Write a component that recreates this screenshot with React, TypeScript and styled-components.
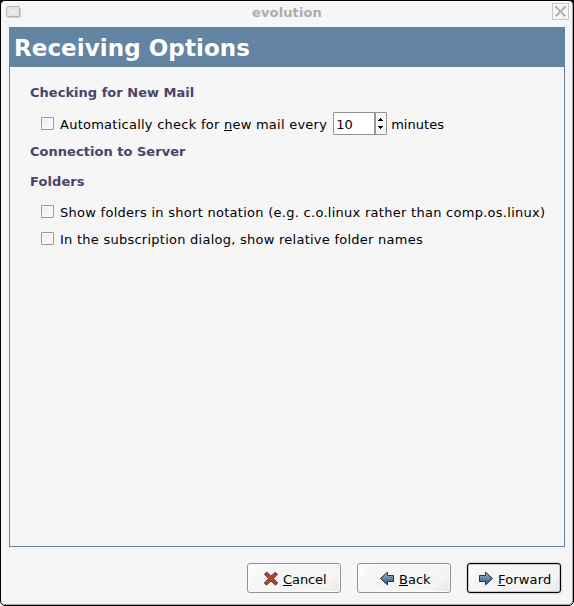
import React from 'react';
import styled, { createGlobalStyle } from 'styled-components';

const GlobalStyle = createGlobalStyle`
  * { box-sizing: border-box; }
  body { margin: 0; background: #fff; overflow: hidden; }
`;

const Frame = styled.div`
  width: 574px;
  height: 606px;
  background: linear-gradient(#000 0 50%, #fff 50%);
  font: 13px/16px 'DejaVu Sans', sans-serif;
  color: #000;
`;

const Window = styled.div`
  display: flex;
  flex-direction: column;
  height: 606px;
  border: 1px solid #000;
  border-radius: 5px;
  background: #f6f6f6;
  box-shadow: inset -1px -1px 0 #a9a9a9, inset 0 1px 0 #fff;
`;

const TitleBar = styled.header`
  display: flex;
  justify-content: space-between;
  height: 26px;
  padding: 1px 4px 0 5px;
`;

const WindowIcon = styled.svg`
  display: block;
  width: 15px;
  height: 12px;
  margin-top: 4px;
`;

const CloseIcon = styled.svg`
  display: block;
  width: 17px;
  height: 17px;
  margin-top: 1px;
`;

const Fitted = styled.span<{ $spacing?: number }>`
  letter-spacing: ${(p) => p.$spacing ?? 0}px;
  white-space: pre;
`;

const WindowTitle = styled.div`
  padding: 3px 0 0 1px;
  font-weight: bold;
  color: #acacac;
`;

const Panel = styled.main`
  width: 556px;
  height: 520px;
  margin-left: 8px;
  border: 1px solid #6384a3;
`;

const Banner = styled.h1`
  height: 39px;
  margin: 0;
  padding: 6px 4px 0;
  background: #6384a3;
  color: #fff;
  font-size: 23px;
  line-height: 29px;
`;

const Options = styled.div`
  padding: 18px 0 0 20px;
`;

const SectionTitle = styled.h2<{ $after: number }>`
  height: 16px;
  margin: 0 0 ${(p) => p.$after}px;
  font-size: 13px;
  line-height: 16px;
  color: #4b4368;
`;

const OptionRow = styled.label<{ $height: number; $after: number }>`
  display: flex;
  align-items: center;
  height: ${(p) => p.$height}px;
  margin: 0 0 ${(p) => p.$after}px 11px;
`;

const CheckBox = styled.input`
  appearance: none;
  flex: none;
  width: 13px;
  height: 13px;
  margin: 0 6px 2px 0;
  border: 1px solid #999;
  border-radius: 1px;
  background: linear-gradient(135deg, #ededed, #fcfcfc);
  box-shadow: inset 0 0 0 1px #fafafa;
`;

const SpinBox = styled.div`
  display: flex;
  width: 54px;
  height: 23px;
  margin: 0 4px 2px 6px;
  border: 1px solid #929292;
  border-radius: 1px;
  background: #fff;
`;

const SpinValue = styled.div`
  width: 42px;
  padding: 4px 0 0 2px;
  border-right: 2px solid #999;
`;

const SpinArrows = styled.svg`
  width: 10px;
  height: 21px;
  background: #f8f8f8;
`;

const Actions = styled.footer`
  display: flex;
  gap: 16px;
  margin: 16px 0 0 246px;
`;

const Button = styled.button<{ $primary?: boolean; $inset: number }>`
  display: flex;
  align-items: flex-start;
  width: 94px;
  height: 30px;
  padding: 8px 0 0 ${(p) => p.$inset}px;
  border: 1px solid ${(p) => (p.$primary ? '#000' : '#929292')};
  border-radius: 3px;
  background: linear-gradient(135deg, #fff 0, #f6f6f6 18%, #f4f4f4 82%, #e7e7e7 100%);
  box-shadow: ${(p) => (p.$primary ? '0 0 2px #888, inset 0 0 0 1px #c8c8c8' : 'inset 0 0 0 1px #fbfbfb')};
  font: inherit;
  color: #000;
`;

const ButtonIcon = styled.svg`
  flex: none;
  width: 16px;
  height: 16px;
  margin: -1px 4px 0 0;
  filter: drop-shadow(0 0 0.5px #888);
`;

const Key = styled.span`
  background: linear-gradient(#000, #000) 0 calc(100% - 1px) / 100% 1px no-repeat;
`;

const Arrow = ({ flip }: { flip?: boolean }) => (
  <ButtonIcon viewBox="0 0 16 16">
    <defs>
      <linearGradient id={flip ? 'back' : 'forward'} x2="0" y2="1">
        <stop stopColor="#a4bfd7" />
        <stop offset=".5" stopColor="#6084a7" />
        <stop offset="1" stopColor="#315579" />
      </linearGradient>
    </defs>
    <path
      transform={flip ? 'matrix(-1 0 0 1 16 0)' : undefined}
      d="M1.5 4.5H7.5V1.3L14.5 7.5L7.5 13.8V10.5H1.5Z"
      fill={`url(#${flip ? 'back' : 'forward'})`}
      stroke="#273440"
    />
  </ButtonIcon>
);

const Cross = () => (
  <ButtonIcon viewBox="0 0 16 16">
    <path
      d="M1.5 3.2L3.7 1.3L8 5.2L12.3 1.4L14.4 3.3L10.4 7.5L14.4 11.9L12.5 14L8 10L3.5 14L1.5 12L5.7 7.5Z"
      fill="#c83c25"
      stroke="#51433f"
    />
  </ButtonIcon>
);

export default function App() {
  return (
    <>
      <GlobalStyle />
      <Frame>
        <Window>
          <TitleBar>
            <WindowIcon viewBox="0 0 15 12">
              <rect x=".5" y=".5" width="13" height="10" rx="1" fill="#e2e2e2" stroke="#b4b4b4" />
              <path d="M1.5 11.2H14.2V2" fill="none" stroke="#b0b0b0" strokeWidth=".8" />
              <path d="M2 2L7 6.5L12 2M2 9L5.5 6M12 9L8.5 6" fill="none" stroke="#f7f7f7" />
            </WindowIcon>
            <WindowTitle><Fitted $spacing={0.12}>evolution</Fitted></WindowTitle>
            <CloseIcon viewBox="0 0 17 17" shapeRendering="crispEdges">
              <rect x=".5" y=".5" width="16" height="16" fill="#f5f5f5" stroke="#c8c8c8" />
              <path d="M3.5 3.5L13.5 13.5M13.5 3.5L3.5 13.5" stroke="#b5b5b5" strokeWidth="2" />
            </CloseIcon>
          </TitleBar>
          <Panel>
            <Banner><Fitted $spacing={0.06}>Receiving Options</Fitted></Banner>
            <Options>
              <SectionTitle $after={12}><Fitted $spacing={0.02}>Checking for New Mail</Fitted></SectionTitle>
              <OptionRow $height={23} $after={8}>
                <CheckBox type="checkbox" />
                <Fitted $spacing={0.25}>Automatically check for <Key>n</Key>ew mail every</Fitted>
                <SpinBox>
                  <SpinValue>10</SpinValue>
                  <SpinArrows viewBox="0 0 10 21" shapeRendering="crispEdges">
                    <path d="M2 8h5v-1h-1v-1h-1v-1h-1v1h-1v1h-1zM2 13h5v1h-1v1h-1v1h-1v-1h-1v-1h-1z" />
                  </SpinArrows>
                </SpinBox>
                <Fitted $spacing={0.05}>minutes</Fitted>
              </OptionRow>
              <SectionTitle $after={14}><Fitted $spacing={0.03}>Connection to Server</Fitted></SectionTitle>
              <SectionTitle $after={12}><Fitted $spacing={0.1}>Folders</Fitted></SectionTitle>
              <OptionRow $height={21} $after={6}>
                <CheckBox type="checkbox" />
                <Fitted $spacing={0.275}>Show folders in short notation (e.g. c.o.linux rather than comp.os.linux)</Fitted>
              </OptionRow>
              <OptionRow $height={21} $after={0}>
                <CheckBox type="checkbox" />
                <Fitted $spacing={0.25}>In the subscription dialog, show relative folder names</Fitted>
              </OptionRow>
            </Options>
          </Panel>
          <Actions>
            <Button $inset={15}><Cross /><Fitted $spacing={-0.08}><Key>C</Key>ancel</Fitted></Button>
            <Button $inset={21}><Arrow flip /><Fitted><Key>B</Key>ack</Fitted></Button>
            <Button $primary $inset={10}><Arrow /><Fitted $spacing={0.15}><Key>F</Key>orward</Fitted></Button>
          </Actions>
        </Window>
      </Frame>
    </>
  );
}
